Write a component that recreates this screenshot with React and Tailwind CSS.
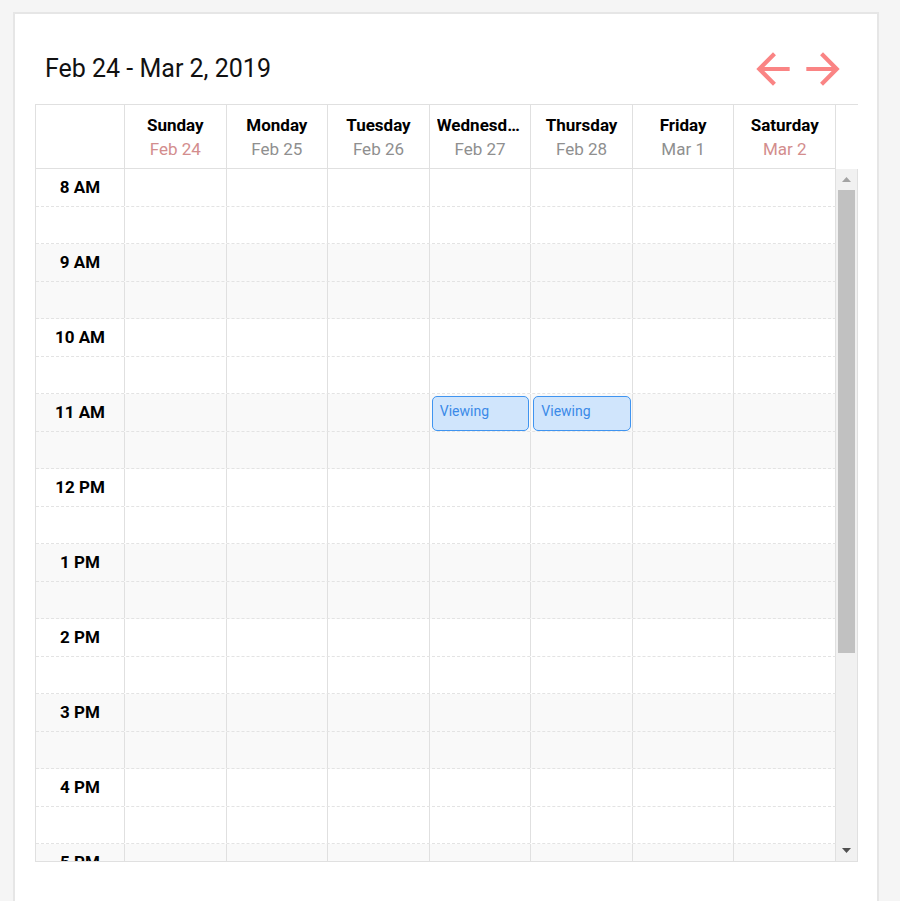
import React from "react";
import { MdArrowBack, MdArrowForward } from "react-icons/md";

const days = [
  { name: "Sunday", date: "Feb 24", weekend: true },
  { name: "Monday", date: "Feb 25" },
  { name: "Tuesday", date: "Feb 26" },
  { name: "Wednesday", date: "Feb 27" },
  { name: "Thursday", date: "Feb 28" },
  { name: "Friday", date: "Mar 1" },
  { name: "Saturday", date: "Mar 2", weekend: true },
];

const hours = ["8 AM", "9 AM", "10 AM", "11 AM", "12 PM", "1 PM", "2 PM", "3 PM", "4 PM", "5 PM", "6 PM"];

function Event() {
  return (
    <div className="mt-[2px] ml-[2px] mr-[1px] h-[35px] rounded-[5px] border border-[#3f94f0] bg-[#d0e5fc] px-[7px] pt-[4px] text-[14px] leading-[20px] text-[#3b8ae8]">
      Viewing
    </div>
  );
}

function Slot({ hourIndex, half, label }) {
  const shaded = hourIndex % 2 === 1;
  return (
    <div
      className={
        "flex h-[37.5px] border-b border-dashed border-[#e3e3e3] " +
        (shaded ? "bg-[#f9f9f9]" : "bg-white")
      }
    >
      <div className="flex w-[89px] shrink-0 items-center justify-center border-r border-solid border-[#e0e0e0] text-[17px] font-bold text-black">
        {half === 0 ? label : ""}
      </div>
      {days.map((d, di) => (
        <div key={di} className="min-w-0 flex-1 border-r border-solid border-[#e0e0e0]">
          {hourIndex === 3 && half === 0 && (di === 3 || di === 4) ? <Event /> : null}
        </div>
      ))}
    </div>
  );
}

export default function App() {
  return (
    <div className="h-screen overflow-hidden bg-[#f5f5f5] pl-[13px] pt-[12px] font-['Roboto',sans-serif]">
      <div className="h-[920px] w-[866px] border-2 border-[#e6e6e6] bg-white px-[20px] pt-[30px]">
        <div className="mb-[10px] flex h-[50px] items-center justify-between">
          <h1 className="pl-[10px] text-[25px] font-normal text-[#111]">Feb 24 - Mar 2, 2019</h1>
          <div className="flex pr-[9px] text-[#fa8484]">
            <MdArrowBack size={50} />
            <MdArrowForward size={50} />
          </div>
        </div>

        <div className="w-[823px] border-l border-[#e0e0e0]">
          {/* header */}
          <div className="flex border-t border-[#e0e0e0]">
            <div className="h-[64px] w-[89px] shrink-0 border-r border-b border-[#e0e0e0]" />
            {days.map((d) => (
              <div
                key={d.name}
                className="flex h-[64px] min-w-0 flex-1 flex-col items-center justify-center border-r border-b border-[#e0e0e0] px-[7px]"
              >
                <div className="w-full truncate text-center text-[17px] font-bold leading-[24px] text-black">
                  {d.name}
                </div>
                <div
                  className={
                    "text-[17px] leading-[24px] " + (d.weekend ? "text-[#d38d8d]" : "text-[#8f8f8f]")
                  }
                >
                  {d.date}
                </div>
              </div>
            ))}
            <div className="w-[22px] shrink-0" />
          </div>

          {/* body */}
          <div className="flex h-[693px] border-r border-b border-[#e0e0e0]">
            <div className="min-w-0 flex-1 overflow-hidden">
              {hours.map((h, i) => (
                <React.Fragment key={h}>
                  <Slot hourIndex={i} half={0} label={h} />
                  <Slot hourIndex={i} half={1} label={h} />
                </React.Fragment>
              ))}
            </div>
            <div className="flex w-[21px] shrink-0 flex-col bg-[#f1f1f1]">
              <div className="flex h-[21px] items-center justify-center">
                <svg width="9" height="5" viewBox="0 0 9 5">
                  <polygon points="4.5,0 9,5 0,5" fill="#a3a3a3" />
                </svg>
              </div>
              <div className="flex-1">
                <div className="ml-[2px] h-[463px] w-[17px] bg-[#c1c1c1]" />
              </div>
              <div className="flex h-[21px] items-center justify-center">
                <svg width="9" height="5" viewBox="0 0 9 5">
                  <polygon points="0,0 9,0 4.5,5" fill="#505050" />
                </svg>
              </div>
            </div>
          </div>
        </div>
      </div>
    </div>
  );
}
